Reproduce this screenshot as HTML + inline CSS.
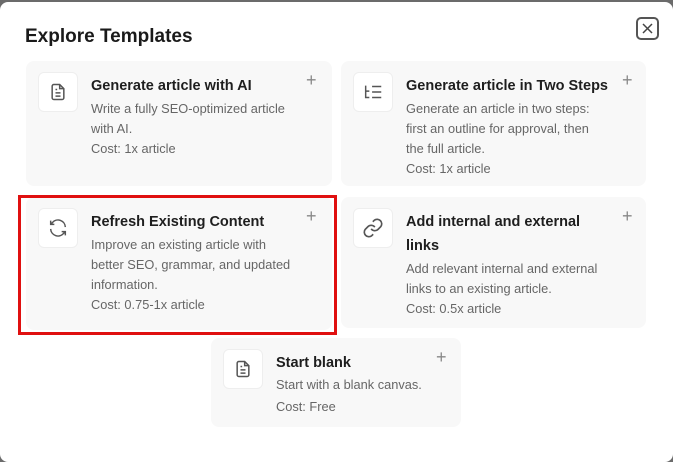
<!DOCTYPE html>
<html><head><style>
*{margin:0;padding:0;box-sizing:border-box}
body{width:673px;height:449px;background:#6b6b6b;font-family:"Liberation Sans",sans-serif;position:relative;overflow:hidden}
.modal{position:absolute;left:0;top:2px;width:673px;height:460px;background:#fff;border-radius:8px}
h1{position:absolute;left:25px;top:24px;font-size:19px;font-weight:700;color:#1a1a1a}
.close{position:absolute;left:636px;top:15px;width:23px;height:23px;border:2px solid #555;border-radius:5px}
.card{position:absolute;background:#f8f8f8;border-radius:8px}
.ic{position:absolute;left:12px;top:11px;width:40px;height:40px;background:#fff;border:1px solid #eee;border-radius:6px;display:flex;align-items:center;justify-content:center}
.t{position:absolute;left:65px;top:13px;font-size:14.5px;font-weight:700;color:#1e1e1e;line-height:24px}
.d{position:absolute;left:65px;font-size:12.8px;color:#666;line-height:20px}
.plus{position:absolute;top:9px;font-size:18px;color:#888;font-weight:300}
.red{position:absolute;left:18px;top:195px;width:319px;height:140px;border:3px solid #e01010}
</style></head><body>
<div class="modal">
<h1>Explore Templates</h1>
<div class="close"><svg width="19" height="19" viewBox="0 0 19 19"><path d="M5 5L14 14M14 5L5 14" stroke="#444" stroke-width="1.5"/></svg></div>
</div>

<div class="card" style="left:26px;top:61px;width:306px;height:125px">
<div class="ic"><svg width="20" height="20" viewBox="0 0 24 24" fill="none" stroke="#555" stroke-width="1.8"><path d="M14 3H7a2 2 0 0 0-2 2v14a2 2 0 0 0 2 2h10a2 2 0 0 0 2-2V8z"/><path d="M14 3v5h5M9 13h6M9 17h6M9 9h2"/></svg></div>
<div class="t">Generate article with AI</div>
<div class="d" style="top:38px">Write a fully SEO-optimized article<br>with AI.</div>
<div class="d" style="top:78px">Cost: 1x article</div>
<div class="plus" style="left:280px">+</div>
</div>

<div class="card" style="left:341px;top:61px;width:305px;height:125px">
<div class="ic"><svg width="22" height="20" viewBox="0 0 24 20" fill="none" stroke="#555" stroke-width="1.6"><path d="M4 3v13h4M4 9h4M11 4h10M11 10h10M11 16h10"/></svg></div>
<div class="t">Generate article in Two Steps</div>
<div class="d" style="top:38px">Generate an article in two steps:<br>first an outline for approval, then<br>the full article.</div>
<div class="d" style="top:98px">Cost: 1x article</div>
<div class="plus" style="left:281px">+</div>
</div>

<div class="card" style="left:26px;top:197px;width:306px;height:133px">
<div class="ic"><svg width="22" height="22" viewBox="0 0 24 24" fill="none" stroke="#555" stroke-width="1.6"><path d="M20 11a8 8 0 0 0-14-5l-2 2M4 4v4h4M4 13a8 8 0 0 0 14 5l2-2M20 20v-4h-4"/></svg></div>
<div class="t">Refresh Existing Content</div>
<div class="d" style="top:38px">Improve an existing article with<br>better SEO, grammar, and updated<br>information.</div>
<div class="d" style="top:98px">Cost: 0.75-1x article</div>
<div class="plus" style="left:280px">+</div>
</div>
<div class="red"></div>

<div class="card" style="left:341px;top:197px;width:305px;height:131px">
<div class="ic"><svg width="22" height="22" viewBox="0 0 24 24" fill="none" stroke="#555" stroke-width="1.8"><path d="M10 13a5 5 0 0 0 7.5.5l3-3a5 5 0 0 0-7-7l-1.7 1.7"/><path d="M14 11a5 5 0 0 0-7.5-.5l-3 3a5 5 0 0 0 7 7l1.7-1.7"/></svg></div>
<div class="t">Add internal and external<br>links</div>
<div class="d" style="top:62px">Add relevant internal and external<br>links to an existing article.</div>
<div class="d" style="top:102px">Cost: 0.5x article</div>
<div class="plus" style="left:281px">+</div>
</div>

<div class="card" style="left:211px;top:338px;width:250px;height:89px">
<div class="ic"><svg width="20" height="20" viewBox="0 0 24 24" fill="none" stroke="#555" stroke-width="1.8"><path d="M14 3H7a2 2 0 0 0-2 2v14a2 2 0 0 0 2 2h10a2 2 0 0 0 2-2V8z"/><path d="M14 3v5h5M9 13h6M9 17h6M9 9h2"/></svg></div>
<div class="t">Start blank</div>
<div class="d" style="top:37px">Start with a blank canvas.</div>
<div class="d" style="top:59px">Cost: Free</div>
<div class="plus" style="left:225px">+</div>
</div>
</body></html>
